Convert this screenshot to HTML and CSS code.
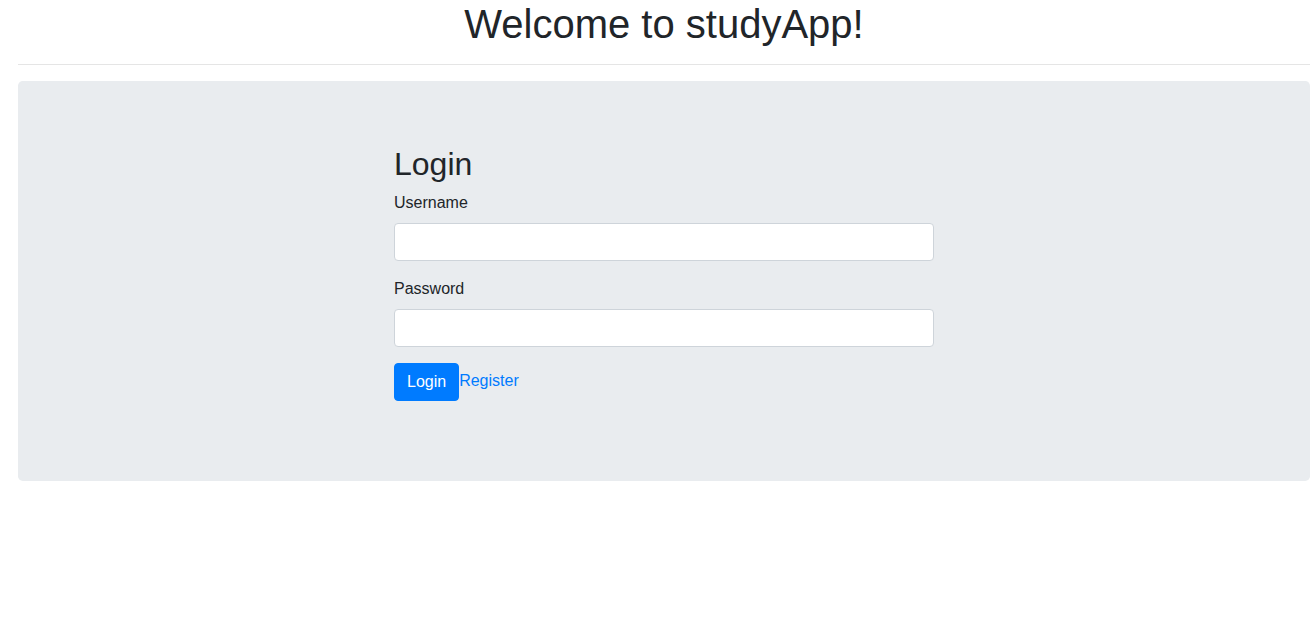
FILE: index.html
```html
<!DOCTYPE html>
<html lang="en">
<head>
<meta charset="utf-8">
<title>studyApp</title>
<link rel="stylesheet" href="styles.css">
</head>
<body>
<main class="page">
  <h1 class="title">Welcome to studyApp!</h1>
  <hr class="divider">
  <section class="jumbotron">
    <form class="login-form">
      <h2 class="form-title">Login</h2>
      <div class="form-group">
        <label class="form-label" for="username">Username</label>
        <input class="form-control" id="username" type="text">
      </div>
      <div class="form-group">
        <label class="form-label" for="password">Password</label>
        <input class="form-control" id="password" type="password">
      </div>
      <div class="actions">
        <button type="button" class="btn">Login</button><a class="link" href="#">Register</a>
      </div>
    </form>
  </section>
</main>
</body>
</html>
```
FILE: styles.css
```css
* { box-sizing: border-box; }
html, body { margin: 0; padding: 0; }
body {
  font-family: "Liberation Sans", Arial, Helvetica, sans-serif;
  font-size: 16px;
  line-height: 1.5;
  color: #212529;
  background: #fff;
}
.page {
  margin-left: 18px;
  margin-right: 0;
}
.title {
  margin: 0;
  font-size: 40px;
  font-weight: 500;
  line-height: 1.2;
  text-align: center;
}
.divider {
  margin: 16px 0;
  border: 0;
  border-top: 1px solid rgba(0,0,0,.1);
  height: 0;
}
.jumbotron {
  background: #e9ecef;
  border-radius: 4.8px;
  padding: 64px 32px 80px;
  display: flex;
  justify-content: center;
}
.login-form {
  width: 540px;
}
.form-title {
  margin: 0 0 8px;
  font-size: 32px;
  font-weight: 500;
  line-height: 1.2;
}
.form-group {
  margin-bottom: 16px;
}
.form-label {
  display: inline-block;
  margin-bottom: 8px;
}
.form-control {
  display: block;
  width: 100%;
  height: 38px;
  padding: 6px 12px;
  font-size: 16px;
  font-family: inherit;
  color: #495057;
  background: #fff;
  border: 1px solid #ced4da;
  border-radius: 4px;
}
.actions {
  display: block;
}
.btn {
  display: inline-block;
  vertical-align: middle;
  font-family: inherit;
  font-size: 16px;
  line-height: 1.5;
  padding: 6px 12px;
  color: #fff;
  background: #007bff;
  border: 1px solid #007bff;
  border-radius: 4px;
}
.link {
  color: #007bff;
  text-decoration: none;
}
```
